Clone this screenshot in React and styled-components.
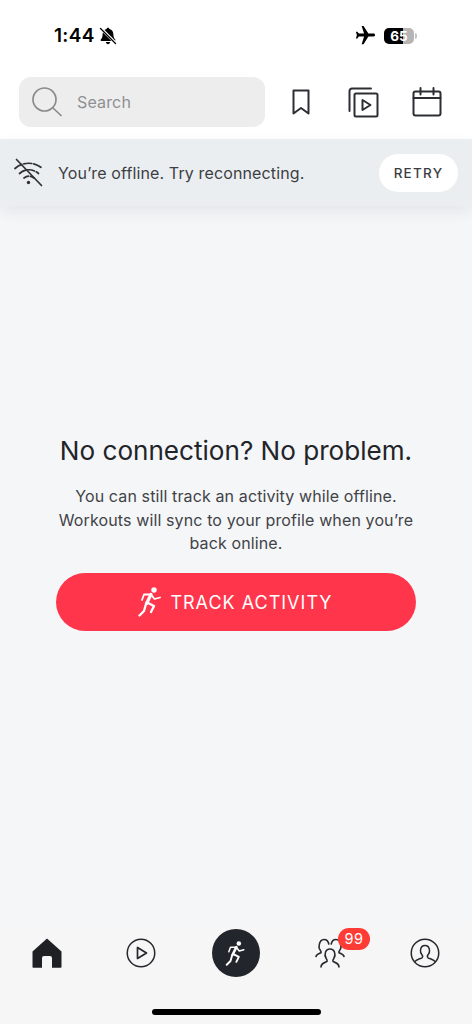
import React from "react";
import styled, { createGlobalStyle } from "styled-components";
import { MdFlight } from "react-icons/md";

const Global = createGlobalStyle`
  html, body { margin: 0; padding: 0; background: #f5f6f8; }
  * { box-sizing: border-box; }
  body { font-family: Inter, "Liberation Sans", sans-serif; }
`;

const Screen = styled.div`
  width: 472px; height: 1024px; display: flex; flex-direction: column;
  background: #f5f6f8; overflow: hidden;
`;
const Header = styled.header`background: #fff; height: 139px; display: flex; flex-direction: column;`;
const StatusBar = styled.div`
  height: 77px; padding: 25px 55px 0 54px; display: flex; justify-content: space-between; align-items: flex-start; color: #000;
`;
const StatusGroup = styled.div`display: flex; align-items: center; height: 21px; gap: ${p => p.$gap}px;`;
const Time = styled.span`font-size: 19px; font-weight: 600; line-height: 21px; letter-spacing: 0.3px;`;
const Plane = styled(MdFlight)`transform: rotate(90deg); width: 23px; height: 23px;`;
const BatteryWrap = styled.div`display: flex; align-items: center; gap: 1px;`;
const Battery = styled.div`
  width: 30px; height: 16px; border-radius: 5px; display: flex; align-items: center; justify-content: center;
  background: linear-gradient(90deg, #000 0 62%, #b5b5b5 62% 100%);
  color: #fff; font-size: 13.5px; font-weight: 700; line-height: 16px;
`;
const BatteryNub = styled.div`width: 2px; height: 6px; border-radius: 0 2px 2px 0; background: #c4c4c4;`;
const Toolbar = styled.div`display: flex; align-items: flex-start; padding-left: 19px;`;
const SearchBox = styled.div`
  width: 246px; height: 50px; border-radius: 12px; background: #ededed; display: flex; align-items: center; padding-left: 12px; gap: 14px;
`;
const SearchLabel = styled.span`font-size: 16px; color: #8f9093; letter-spacing: 0.15px;`;
const ToolIcons = styled.div`display: flex; align-items: center; height: 50px; margin-left: 26px;`;
const ToolIcon = styled.svg`display: block; margin-right: ${p => p.$mr}px;`;
const Banner = styled.div`
  height: 67px; background: #ebeef1; display: flex; align-items: center; padding: 0 14px; position: relative;
  box-shadow: 0 6px 14px rgba(30, 35, 45, 0.07);
`;
const BannerText = styled.span`font-size: 16px; color: #3c3e43; margin-left: 14px; flex: 1; white-space: nowrap; letter-spacing: 0.13px;`;
const RetryButton = styled.button`
  border: 0; background: #fff; border-radius: 19px; width: 79px; height: 38px; font: 500 13.5px Inter, sans-serif;
  letter-spacing: 1.25px; color: #3a3c41; padding: 0;
`;
const Content = styled.main`
  flex: 1; display: flex; flex-direction: column; align-items: center; padding-top: 227px;
`;
const Title = styled.h1`margin: 0; font-size: 26.1px; line-height: 36px; font-weight: 400; color: #222428; text-align: center; white-space: nowrap;`;
const Body = styled.p`
  margin: 16px 0 0; width: 372px; font-size: 16px; line-height: 23.5px; color: #414347; text-align: center; letter-spacing: 0.12px;
`;
const TrackButton = styled.button`
  margin-top: 17px; width: 360px; height: 58px; border: 0; border-radius: 29px; background: #ff354c; color: #fff;
  display: flex; align-items: center; justify-content: center; gap: 5px; font: 400 18px Inter, sans-serif; letter-spacing: 1px; padding: 0 4px 0 0;
`;
const ButtonLabel = styled.span`padding-top: 2px;`;
const TabBar = styled.nav`
  height: 99px; background: #f6f6f7; position: relative; display: grid; grid-template-columns: 94px 94px 95px 94px 95px; padding-top: 3px;
`;
const Tab = styled.div`height: 50px; display: flex; align-items: center; justify-content: center; position: relative;`;
const CenterTab = styled.div`
  width: 48px; height: 48px; border-radius: 50%; background: #22252b; display: flex; align-items: center; justify-content: center;
`;
const Badge = styled.span`
  position: absolute; left: 55px; top: 0; width: 32px; height: 22px; border-radius: 11px; background: #ff3b36; color: #fff;
  font-size: 14.5px; line-height: 22px; text-align: center; letter-spacing: 0.4px;
`;
const HomeBar = styled.div`
  position: absolute; left: 152px; bottom: 9px; width: 169px; height: 6px; border-radius: 3px; background: #000;
`;

const Runner = ({ size, color = "#fff" }) => (
  <svg width={size} height={size} viewBox="0 0 24 30" fill="none" stroke={color} strokeLinecap="round" strokeLinejoin="round">
    <circle cx="16" cy="3" r="2.700" fill={color} stroke="none" />
    <path strokeWidth="3.200" d="M13 7.500 8.500 16.500" />
    <path strokeWidth="1.800" d="M4 13 6 7.500h7l3.500 4.500 5.500-1.500" />
    <path strokeWidth="2.300" d="M10 16l6 3-3 6" />
    <path strokeWidth="2.300" d="M8 17 6 24 1.500 28.500" />
  </svg>
);

const BellOff = () => (
  <svg width="18" height="18" viewBox="0 0 18 18">
    <path fill="#000" d="M9 .8c.8 0 1.300.5 1.400 1.200 2.800.7 4 3 4 5.500 0 2.400.6 3.800 1.800 5 .5.600.2 1.500-.7 1.500H2.500c-.9 0-1.200-.9-.7-1.500 1.200-1.200 1.800-2.600 1.800-5 0-2.500 1.200-4.800 4-5.500C7.700 1.300 8.200.8 9 .8zM6.800 15h4.400c-.2 1.200-1.100 2.200-2.200 2.200S7 16.200 6.800 15z" />
    <path stroke="#fff" strokeWidth="3" d="M1.500 1 17 16.500" />
    <path stroke="#000" strokeWidth="1.300" strokeLinecap="round" d="M1.500 1.500 16.500 16.500" />
  </svg>
);

export default function App() {
  return (
    <Screen>
      <Global />
      <Header>
        <StatusBar>
          <StatusGroup $gap={4}>
            <Time>1:44</Time>
            <BellOff />
          </StatusGroup>
          <StatusGroup $gap={7}>
            <Plane />
            <BatteryWrap>
              <Battery>65</Battery>
              <BatteryNub />
            </BatteryWrap>
          </StatusGroup>
        </StatusBar>
        <Toolbar>
          <SearchBox>
            <svg width="32" height="32" viewBox="0 0 32 32" fill="none" stroke="#8a8b8d" strokeWidth="1.700" strokeLinecap="round">
              <circle cx="13.500" cy="13.500" r="11.500" />
              <path d="m22 22 8 7.500" />
            </svg>
            <SearchLabel>Search</SearchLabel>
          </SearchBox>
          <ToolIcons>
            <ToolIcon $mr={37} width="20" height="26" viewBox="0 0 20 26" fill="none" stroke="#2c2e33" strokeWidth="2" strokeLinejoin="round">
              <path d="M2.500 1.500h15v23L10 19l-7.500 5.500z" />
            </ToolIcon>
            <ToolIcon $mr={33} width="31" height="31" viewBox="0 0 31 31" fill="none" stroke="#2c2e33" strokeWidth="2" strokeLinejoin="round" strokeLinecap="round">
              <path d="M1.500 24V4a2.500 2.500 0 0 1 2.500-2.500h19" />
              <rect x="6.500" y="6.500" width="23" height="23" rx="1.500" />
              <path d="M14.500 13v10l8-5z" />
            </ToolIcon>
            <ToolIcon $mr={0} width="30" height="30" viewBox="0 0 30 30" fill="none" stroke="#2c2e33" strokeWidth="2" strokeLinejoin="round" strokeLinecap="round">
              <rect x="1.500" y="4.500" width="27" height="24" rx="2" />
              <path d="M1.500 11h27M8.500 1v6.500M21.500 1v6.500" />
            </ToolIcon>
          </ToolIcons>
        </Toolbar>
      </Header>
      <Banner>
        <svg width="30" height="30" viewBox="0 0 30 30" fill="none" stroke="#2f3136" strokeWidth="1.700" strokeLinecap="round">
          <path d="M1 10.500C9 3.500 20 3.500 28.500 10.500" strokeDasharray="8 2" />
          <path d="M5.500 15.500c6-5 13-5 19 0" strokeDasharray="7 2" />
          <path d="M10 20c3.500-2.500 6.500-2.500 10 0" strokeDasharray="5 2" />
          <circle cx="14.500" cy="24.500" r="1.700" fill="#2f3136" stroke="none" />
          <path d="M2.500 1.500 27.500 27.500" />
        </svg>
        <BannerText>You’re offline. Try reconnecting.</BannerText>
        <RetryButton>RETRY</RetryButton>
      </Banner>
      <Content>
        <Title>No connection? No problem.</Title>
        <Body>You can still track an activity while offline. Workouts will sync to your profile when you’re back online.</Body>
        <TrackButton>
          <Runner size={30} />
          <ButtonLabel>TRACK ACTIVITY</ButtonLabel>
        </TrackButton>
      </Content>
      <TabBar>
        <Tab>
          <svg width="30" height="30" viewBox="0 0 30 30" fill="#1e2024">
            <path d="M15 .5 29.500 13.500V29a.8.8 0 0 1-.8.8H20V20a2 2 0 0 0-2-2h-6a2 2 0 0 0-2 2v9.800H1.300A.8.800 0 0 1 .5 29V13.500z" />
          </svg>
        </Tab>
        <Tab>
          <svg width="30" height="30" viewBox="0 0 30 30" fill="none" stroke="#26282d" strokeWidth="1.500" strokeLinejoin="round">
            <circle cx="15" cy="15" r="13.750" />
            <path d="M11.500 9.500v11l9-5.500z" strokeWidth="1.700" />
          </svg>
        </Tab>
        <Tab>
          <CenterTab>
            <Runner size={25} />
          </CenterTab>
        </Tab>
        <Tab>
          <svg width="30" height="30" viewBox="0 0 30 30" fill="none" stroke="#26282d" strokeWidth="1.600" strokeLinecap="round" strokeLinejoin="round">
            <path d="M6 29c0-3 2.500-4 6-5.500.5-1-.1-2-.8-3-1.200-1.800-1.500-4-.8-6 .6-2 2.400-3.500 4.600-3.500s4 1.500 4.600 3.500c.7 2 .4 4.200-.8 6-.7 1-1.300 2-.8 3 3.500 1.500 6 2.500 6 5.500" />
            <path d="M1 18.500c.3-1.700 3-2.800 5-3.800.4-.8 0-1.500-.6-2.300-1.200-1.600-1.800-3.500-1.200-5.500C4.800 3.500 6.700 1.500 9 1.500c2.400 0 4.300 1.800 4.800 4.500" />
            <path d="M29 18.500c-.3-1.700-3-2.800-5-3.800-.4-.8 0-1.500.6-2.300 1.200-1.600 1.800-3.500 1.200-5.500C25.200 3.500 23.300 1.500 21 1.500c-2.400 0-4.300 1.800-4.800 4.500" />
          </svg>
          <Badge>99</Badge>
        </Tab>
        <Tab>
          <svg width="30" height="30" viewBox="0 0 30 30" fill="none" stroke="#26282d" strokeWidth="1.500" strokeLinejoin="round">
            <circle cx="15" cy="15" r="13.750" />
            <path d="M4.500 24c1.500-2.600 5.500-3 7.500-4.200 1-.9.800-2-.2-3.200-1.100-1.400-1.500-3-1.300-4.600.3-2.600 2.200-4.500 4.500-4.500s4.200 1.900 4.500 4.500c.2 1.600-.2 3.200-1.300 4.600-1 1.200-1.200 2.300-.2 3.200 2 1.200 6 1.600 7.500 4.200" />
          </svg>
        </Tab>
        <HomeBar />
      </TabBar>
    </Screen>
  );
}
